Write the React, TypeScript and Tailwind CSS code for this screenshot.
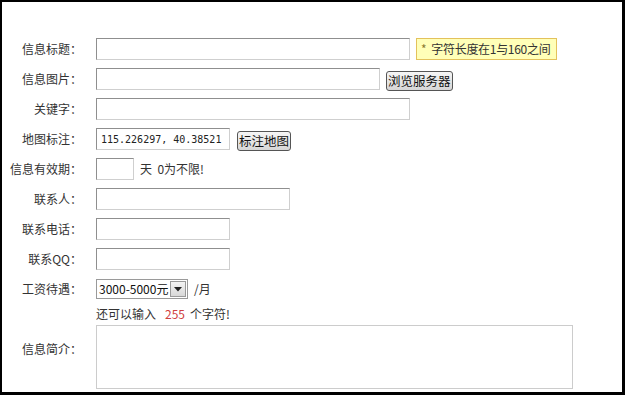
import React from "react";

const font = { fontFamily: '"Noto Sans CJK SC", "Noto Sans", sans-serif' };

const boxCls =
  "h-[22px] border border-t-[#8f8f8f] border-l-[#8f8f8f] border-b-[#cfcfcf] border-r-[#cfcfcf] bg-white px-1 text-[#222] outline-none";
const inputCls = `${boxCls} text-[12px]`;

function Row({ label, children }: { label: string; children: React.ReactNode }) {
  return (
    <div className="flex items-center h-[22px] mb-[8px]">
      <div className="w-[80px] text-right text-[12px] text-[#333] leading-none shrink-0">{label}</div>
      <div className="ml-[14px] flex items-center">{children}</div>
    </div>
  );
}

function Btn({ children }: { children: React.ReactNode }) {
  return (
    <button className="h-[20px] px-[1px] border border-[#555] rounded-[3px] bg-gradient-to-b from-[#f6f6f6] to-[#d6d6d6] text-[12.5px] text-[#111] leading-none whitespace-nowrap">
      {children}
    </button>
  );
}

export default function App() {
  return (
    <div
      className="w-[625px] h-[395px] bg-white border-black border-l-2 border-t-2 border-r-[3px] border-b-[3px] overflow-hidden"
      style={font}
    >
      <div className="pt-[36px]">
        <Row label="信息标题：">
          <input className={`${inputCls} w-[314px]`} />
          <div className="ml-[6px] h-[22px] w-[141px] flex items-center px-[4px] bg-[#ffffb8] border border-[#e3c25c] text-[12px] text-[#333] whitespace-nowrap tracking-[-0.3px]">
            <span className="text-[#8a7a30] mr-[5px]">*</span>字符长度在1与160之间
          </div>
        </Row>
        <Row label="信息图片：">
          <input className={`${inputCls} w-[284px]`} />
          <div className="ml-[6px]">
            <Btn>浏览服务器</Btn>
          </div>
        </Row>
        <Row label="关键字：">
          <input className={`${inputCls} w-[314px]`} />
        </Row>
        <Row label="地图标注：">
          <input
            className={`${boxCls} w-[134px] text-[10px]`}
            style={{ fontFamily: '"DejaVu Sans Mono", monospace' }}
            defaultValue="115.226297, 40.38521"
          />
          <div className="ml-[7px]">
            <Btn>标注地图</Btn>
          </div>
        </Row>
        <Row label="信息有效期：">
          <input className={`${inputCls} w-[38px]`} />
          <span className="ml-[6px] text-[12px] text-[#333]">天&nbsp;&nbsp;0为不限!</span>
        </Row>
        <Row label="联系人：">
          <input className={`${inputCls} w-[194px]`} />
        </Row>
        <Row label="联系电话：">
          <input className={`${inputCls} w-[134px]`} />
        </Row>
        <Row label="联系QQ：">
          <input className={`${inputCls} w-[134px]`} />
        </Row>
        <Row label="工资待遇：">
          <div className="h-[20px] w-[92px] flex items-center border border-[#9a9a9a] bg-white">
            <span className="flex-1 pl-[2px] text-[12px] text-[#111] leading-none whitespace-nowrap">3000-5000元</span>
            <span className="w-[16px] h-[16px] mr-[1px] flex items-center justify-center border border-[#9a9a9a] bg-gradient-to-b from-[#f4f4f4] to-[#d8d8d8]">
              <svg width="8" height="5" viewBox="0 0 8 5">
                <path d="M0 0 H8 L4 4.5 Z" fill="#222" />
              </svg>
            </span>
          </div>
          <span className="ml-[6px] text-[12px] text-[#333]">/月</span>
        </Row>
        <div className="flex items-center">
          <div className="w-[80px] text-right text-[12px] text-[#333] shrink-0">信息简介：</div>
          <div className="ml-[14px] flex flex-col">
            <div className="h-[17px] text-[12px] text-[#333] leading-[12px] whitespace-nowrap">
              还可以输入<span className="ml-[9px] mr-[5px] text-[#d04040]">255</span>个字符!
            </div>
            <textarea className="w-[477px] h-[64px] border border-[#cccccc] outline-none resize-none" />
          </div>
        </div>
      </div>
    </div>
  );
}
